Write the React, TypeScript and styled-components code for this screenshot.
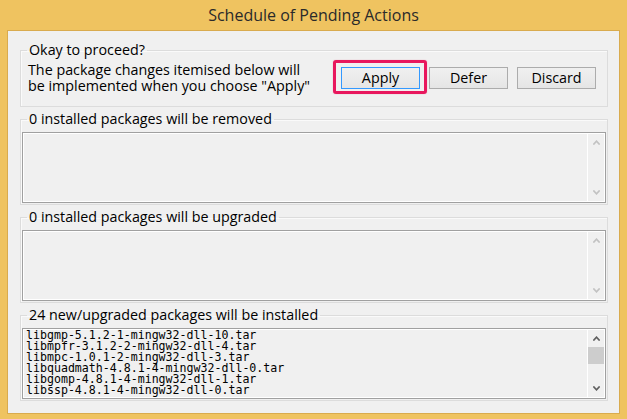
import React from 'react'
import styled, { createGlobalStyle } from 'styled-components'

const GlobalStyle = createGlobalStyle`
  html, body {
    margin: 0;
    padding: 0;
    background: #efc360;
  }
  body {
    width: 627px;
    height: 419px;
    overflow: hidden;
  }
  * {
    box-sizing: border-box;
  }
`

const uiFont = `"Open Sans", "Noto Sans", sans-serif`

const Frame = styled.div`
  width: 627px;
  height: 419px;
  background: #efc360;
  padding: 0 7px 5px 7px;
  display: flex;
  flex-direction: column;
  font-family: ${uiFont};
`

const TitleBar = styled.div`
  height: 30px;
  display: flex;
  align-items: center;
  justify-content: center;
  font-size: 16px;
  color: #2a2a2a;
`

const Client = styled.div`
  flex: 1;
  background: #f0f0f0;
  border: 1px solid #d9ab4e;
  padding: 11px 11px 12px 12px;
  display: flex;
  flex-direction: column;
  gap: 4px;
`

const Group = styled.fieldset<{ $pad?: string }>`
  margin: 0;
  min-width: 0;
  padding: ${p => p.$pad || '5px 1px 1px 1px'};
  border: 1px solid #dcdcdc;
  box-shadow: inset 1px 1px 0 #fafafa;
`

const Legend = styled.legend`
  margin-left: 5px;
  padding: 0 2px;
  font-size: 14.3px;
  line-height: 16px;
  color: #000;
`

const ProceedRow = styled.div`
  display: flex;
  align-items: center;
  justify-content: space-between;
  padding: 0 10px 0 6px;
`

const Message = styled.div`
  font-size: 14.3px;
  line-height: 16px;
  color: #000;
`

const Buttons = styled.div`
  display: flex;
  gap: 9px;
`

const ButtonSlot = styled.span`
  position: relative;
  display: flex;
`

const Button = styled.button<{ $focused?: boolean }>`
  width: 79px;
  height: 22px;
  padding: 0;
  margin: 0;
  border: 1px solid ${p => (p.$focused ? '#3399ff' : '#acacac')};
  background: linear-gradient(#f0f0f0, #e5e5e5);
  font-family: ${uiFont};
  font-size: 14.3px;
  line-height: 18px;
  color: #000;
`

const Highlight = styled.span`
  position: absolute;
  left: -8px;
  right: -7px;
  top: -7px;
  bottom: -5px;
  border: 3px solid #e8175d;
  border-radius: 3px;
  box-shadow: 0 0 1px rgba(232, 23, 93, 0.5);
  pointer-events: none;
`

const ListBox = styled.div`
  height: 71px;
  border: 1px solid #a0a0a0;
  box-shadow: inset 0 0 0 1px #ffffff;
  background: #f0f0f0;
  display: flex;
  overflow: hidden;
`

const Items = styled.div`
  flex: 1;
  padding: 1px 0 0 3px;
  font-family: "DejaVu Sans Mono", "Liberation Mono", monospace;
  font-size: 11.6px;
  line-height: 11px;
  color: #000;
  white-space: pre;
  overflow: hidden;
`

const ScrollBar = styled.div`
  width: 17px;
  margin: 1px 1px 1px 0;
  border-left: 1px solid #ffffff;
  display: flex;
  flex-direction: column;
`

const ArrowButton = styled.div`
  height: 17px;
  display: flex;
  align-items: center;
  justify-content: center;
`

const Track = styled.div`
  flex: 1;
`

const Thumb = styled.div`
  height: 17px;
  background: #cdcdcd;
`

const Chevron = ({ down, color }: { down?: boolean; color: string }) => (
  <svg width="7" height="5" viewBox="0 0 7 5" style={down ? { transform: 'rotate(180deg)' } : undefined}>
    <path d="M0.3 4.6 L3.5 1.2 L6.7 4.6" fill="none" stroke={color} strokeWidth="1.7" />
  </svg>
)

const Scroller = ({ active }: { active?: boolean }) => {
  const color = active ? '#606060' : '#c2c2c2'
  return (
    <ScrollBar>
      <ArrowButton>
        <Chevron color={color} />
      </ArrowButton>
      <Track>{active && <Thumb />}</Track>
      <ArrowButton>
        <Chevron down color={color} />
      </ArrowButton>
    </ScrollBar>
  )
}

const installed = [
  'libgmp-5.1.2-1-mingw32-dll-10.tar',
  'libmpfr-3.1.2-2-mingw32-dll-4.tar',
  'libmpc-1.0.1-2-mingw32-dll-3.tar',
  'libquadmath-4.8.1-4-mingw32-dll-0.tar',
  'libgomp-4.8.1-4-mingw32-dll-1.tar',
  'libssp-4.8.1-4-mingw32-dll-0.tar',
]

const PackageGroup = ({ title, items }: { title: string; items: string[] }) => (
  <Group>
    <Legend>{title}</Legend>
    <ListBox>
      <Items>{items.join('\n')}</Items>
      <Scroller active={items.length > 0} />
    </ListBox>
  </Group>
)

const App = () => {
  return (
    <>
      <GlobalStyle />
      <Frame>
        <TitleBar>Schedule of Pending Actions</TitleBar>
        <Client>
          <Group $pad="4px 1px 12px 1px">
            <Legend>Okay to proceed?</Legend>
            <ProceedRow>
              <Message>
                The package changes itemised below will
                <br />
                be implemented when you choose "Apply"
              </Message>
              <Buttons>
                <ButtonSlot>
                  <Button $focused>Apply</Button>
                  <Highlight />
                </ButtonSlot>
                <Button>Defer</Button>
                <Button>Discard</Button>
              </Buttons>
            </ProceedRow>
          </Group>
          <PackageGroup title="0 installed packages will be removed" items={[]} />
          <PackageGroup title="0 installed packages will be upgraded" items={[]} />
          <PackageGroup title="24 new/upgraded packages will be installed" items={installed} />
        </Client>
      </Frame>
    </>
  )
}

export default App
